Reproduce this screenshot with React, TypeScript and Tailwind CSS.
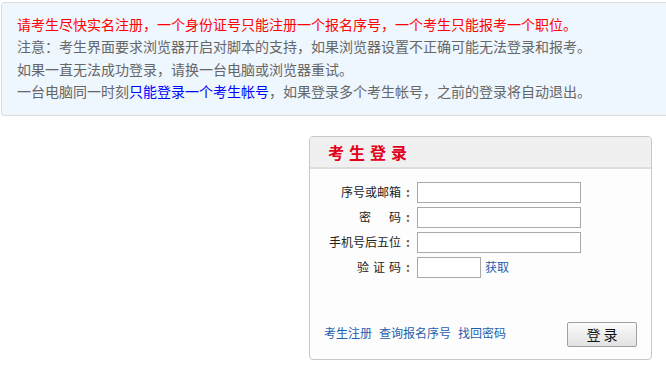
import React from "react"

const rows = [
  { label: <>序号或邮箱</> },
  {
    label: (
      <>
        密<span className="inline-block w-[18px]" />码
      </>
    ),
  },
  { label: <>手机号后五位</> },
]

export default function App() {
  return (
    <div
      className="w-[666px] h-[370px] overflow-hidden bg-white"
      style={{ fontFamily: '"Noto Sans CJK SC", "Noto Sans", sans-serif' }}
    >
      <div className="ml-[1px] mt-[2px] w-[700px] h-[114px] rounded-[3px] border border-[#dcdcdc] bg-[#eef6fe] pl-[15px] pt-[10px] text-[14px] leading-[22.3px] text-[#666]">
        <p className="text-[#ff0000]">请考生尽快实名注册，一个身份证号只能注册一个报名序号，一个考生只能报考一个职位。</p>
        <p>注意：考生界面要求浏览器开启对脚本的支持，如果浏览器设置不正确可能无法登录和报考。</p>
        <p>如果一直无法成功登录，请换一台电脑或浏览器重试。</p>
        <p>
          一台电脑同一时刻<span className="text-[#0000ff]">只能登录一个考生帐号</span>，如果登录多个考生帐号，之前的登录将自动退出。
        </p>
      </div>

      <div className="ml-[309px] mt-[20px] w-[343px] h-[224px] rounded-[4px] border border-[#c8c8c8] bg-[#fdfdfd] overflow-hidden">
        <div className="h-[32px] bg-[#f0f0f0] border-b-2 border-[#dedede] pl-[18px] flex items-center">
          <h2 className="text-[16px] font-bold text-[#e3001b] tracking-[5px]">考生登录</h2>
        </div>

        <div className="pt-[13px] px-[14px] text-[12px] text-[#222]">
          <div className="flex flex-col gap-[5px]">
            {rows.map((r, i) => (
              <div key={i} className="flex items-center h-[20px]">
                <label className="w-[86px] text-right">
                  {r.label}
                  <span className="ml-[5px] font-bold text-[#6b5a2a]">:</span>
                </label>
                <input className="ml-[7px] w-[164px] h-[21px] border border-[#a9a9a9] bg-white outline-none" />
              </div>
            ))}
            <div className="flex items-center h-[20px]">
              <label className="w-[86px] text-right">
                验<span className="inline-block w-[4px]" />证<span className="inline-block w-[4px]" />码
                <span className="ml-[5px] font-bold text-[#6b5a2a]">:</span>
              </label>
              <input className="ml-[7px] w-[64px] h-[21px] border border-[#a9a9a9] bg-white outline-none" />
              <a className="ml-[4px] text-[#1f5fae] cursor-pointer">获取</a>
            </div>
          </div>

          <div className="mt-[45px] flex items-center justify-between">
            <div className="flex gap-[7px] text-[#1f5fae] mt-[-3px]">
              <a className="cursor-pointer">考生注册</a>
              <a className="cursor-pointer">查询报名序号</a>
              <a className="cursor-pointer">找回密码</a>
            </div>
            <button className="w-[70px] h-[25px] rounded-[2px] border border-[#a0a0a0] bg-gradient-to-b from-[#fbfbfb] to-[#e2e2e2] text-[14px] text-[#111]">
              登 录
            </button>
          </div>
        </div>
      </div>
    </div>
  )
}
